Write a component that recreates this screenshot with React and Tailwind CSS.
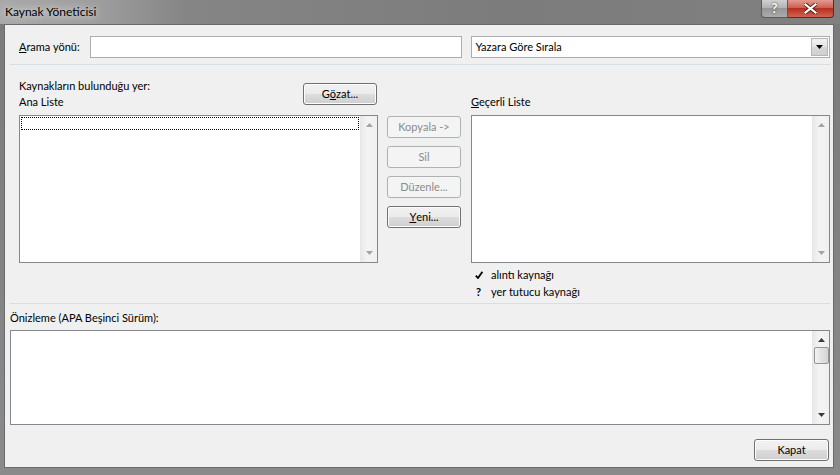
const font = "font-['Segoe_UI','Lato',sans-serif]";

function Btn({ children, disabled, className = "" }) {
  return (
    <div
      className={
        "flex h-[22px] items-center justify-center rounded-[3px] border " +
        (disabled
          ? "border-[#adb2b5] bg-[#f4f4f4] text-[#8b8b8b] "
          : "border-[#707070] bg-[linear-gradient(to_bottom,#f2f2f2_0%,#ebebeb_50%,#dddddd_50%,#cfcfcf_100%)] text-black shadow-[inset_0_0_0_1px_#fcfcfc] ") +
        className
      }
    >
      {children}
    </div>
  );
}

function Arrow({ up, dark }) {
  return (
    <svg width="7" height="4" viewBox="0 0 7 4" className="block">
      <path d={up ? "M0 4 L3.5 0 L7 4 Z" : "M0 0 L7 0 L3.5 4 Z"} fill={dark ? "#3a3a3a" : "#a3a3a3"} />
    </svg>
  );
}

function Scroll({ dark, thumb }) {
  return (
    <div className="flex w-[17px] flex-col items-center justify-between border-l border-[#e6e6e6] bg-[linear-gradient(to_right,#e9e9e9,#f3f3f3_40%,#f0f0f0)] py-[7px]">
      <div className="flex flex-col items-center">
        <Arrow up dark={dark} />
        {thumb && (
          <div className="mt-[5px] h-[17px] w-[15px] rounded-[2px] border border-[#959595] bg-[linear-gradient(to_right,#f3f3f3,#e2e2e2_50%,#d3d3d3)]" />
        )}
      </div>
      <Arrow dark={dark} />
    </div>
  );
}

function ListBox({ focus }) {
  return (
    <div className="flex h-[148px] border border-[#828790] bg-white">
      <div className="flex-1 p-px">
        {focus && <div className="h-[13px] border border-dotted border-black" />}
      </div>
      <Scroll />
    </div>
  );
}

export default function App() {
  return (
    <div className={"h-[475px] w-[840px] overflow-hidden bg-[linear-gradient(to_bottom,#7a7a7a,#8a8a8a)] text-[11px] text-black " + font}>
      {/* title bar */}
      <div className="flex h-[24px] items-start justify-between bg-[linear-gradient(to_right,#a9a9a9_0%,#9d9d9d_12%,#858585_22%,#7c7c7c_60%,#808080_100%)]">
        <div className="whitespace-nowrap pl-[5px] pt-[4px] text-[12px] leading-[15px] [text-shadow:0_0_6px_#e8e8e8,0_0_10px_#d0d0d0]">Kaynak Yöneticisi</div>
        <div className="mr-[6px] flex h-[18px]">
          <div className="flex w-[27px] items-center justify-center rounded-bl-[4px] border border-t-0 border-[#5b5b5b] bg-[linear-gradient(to_bottom,#d0d0d0,#b0b0b0_50%,#969696_50%,#acacac)] text-[13px] font-bold leading-none text-white [text-shadow:0_0_2px_#222]">
            ?
          </div>
          <div className="flex w-[46px] items-center justify-center rounded-br-[4px] border border-l-0 border-t-0 border-[#5b2a24] bg-[linear-gradient(to_bottom,#e39a8f,#cc5a4b_50%,#b6301f_50%,#d0644f)]">
            <svg width="13" height="11" viewBox="0 0 13 11">
              <path d="M1.5 1.5 L11.5 9.5 M11.5 1.5 L1.5 9.5" stroke="#4a2018" strokeWidth="4" strokeLinecap="square" />
              <path d="M1.5 1.5 L11.5 9.5 M11.5 1.5 L1.5 9.5" stroke="#fff" strokeWidth="2.2" strokeLinecap="square" />
            </svg>
          </div>
        </div>
      </div>

      {/* client */}
      <div className="ml-[4px] mr-[6px] flex h-[444px] flex-col border border-[#6a6a6a] bg-[#f0f0f0] pl-[5px] pr-[3px]">
        {/* search row */}
        <div className="mt-[11px] flex h-[22px] items-center">
          <div className="w-[80px] whitespace-nowrap pl-[9px]">
            <span className="underline">A</span>rama yönü:
          </div>
          <div className="h-[22px] w-[373px] border border-[#abadb3] bg-white" />
          <div className="ml-[9px] flex h-[22px] w-[359px] items-center border border-[#abadb3] bg-white pl-[3px] pr-px">
            <span className="flex-1">Yazara Göre Sırala</span>
            <div className="flex h-[18px] w-[17px] items-center justify-center border border-[#b5b5b5] bg-[linear-gradient(to_bottom,#f2f2f2,#e4e4e4_50%,#d6d6d6_50%,#d0d0d0)]">
              <svg width="7" height="4" viewBox="0 0 7 4">
                <path d="M0 0 L7 0 L3.5 4 Z" fill="#000" />
              </svg>
            </div>
          </div>
        </div>

        <div className="mt-[6px] h-px bg-[#d5dfe5]" />

        {/* lists */}
        <div className="flex pl-[9px]">
          <div className="w-[359px]">
            <div className="flex h-[50px] justify-between">
              <div className="pt-[13px] leading-[16px]">
                <div>Kaynakların bulunduğu yer:</div>
                <div>Ana Liste</div>
              </div>
              <Btn className="mr-px mt-[18px] w-[74px]">
                G<span className="underline">ö</span>zat...
              </Btn>
            </div>
            <ListBox focus />
          </div>

          <div className="ml-[9px] flex w-[74px] flex-col gap-[8px] pt-[51px]">
            <Btn disabled>Kopyala -&gt;</Btn>
            <Btn disabled>Sil</Btn>
            <Btn disabled>Düzenle...</Btn>
            <Btn>
              <span className="underline">Y</span>eni...
            </Btn>
          </div>

          <div className="ml-[10px] w-[359px]">
            <div className="h-[50px] pt-[29px] leading-[16px]">
              <span className="underline">G</span>eçerli Liste
            </div>
            <ListBox />
            <div className="mt-[3px] pl-[4px] leading-[17px]">
              <div className="flex items-center">
                <svg width="8" height="8" viewBox="0 0 8 8" className="mr-[8px]">
                  <path d="M0.8 4.6 L3 7 L7.4 0.8" stroke="#000" strokeWidth="1.8" fill="none" />
                </svg>
                <span>alıntı kaynağı</span>
              </div>
              <div className="flex items-center">
                <span className="w-[16px] pl-[1px] font-bold">?</span>
                <span>yer tutucu kaynağı</span>
              </div>
            </div>
          </div>
        </div>

        <div className="mt-[3px] h-px bg-[#d5dfe5]" />

        <div className="mt-[6px] leading-[16px]">Önizleme (APA Beşinci Sürüm):</div>
        <div className="mt-[4px] flex h-[95px] border border-[#828790] bg-white">
          <div className="flex-1" />
          <Scroll dark thumb />
        </div>

        <Btn className="mr-px mt-[14px] w-[75px] self-end">Kapat</Btn>
      </div>
    </div>
  );
}
